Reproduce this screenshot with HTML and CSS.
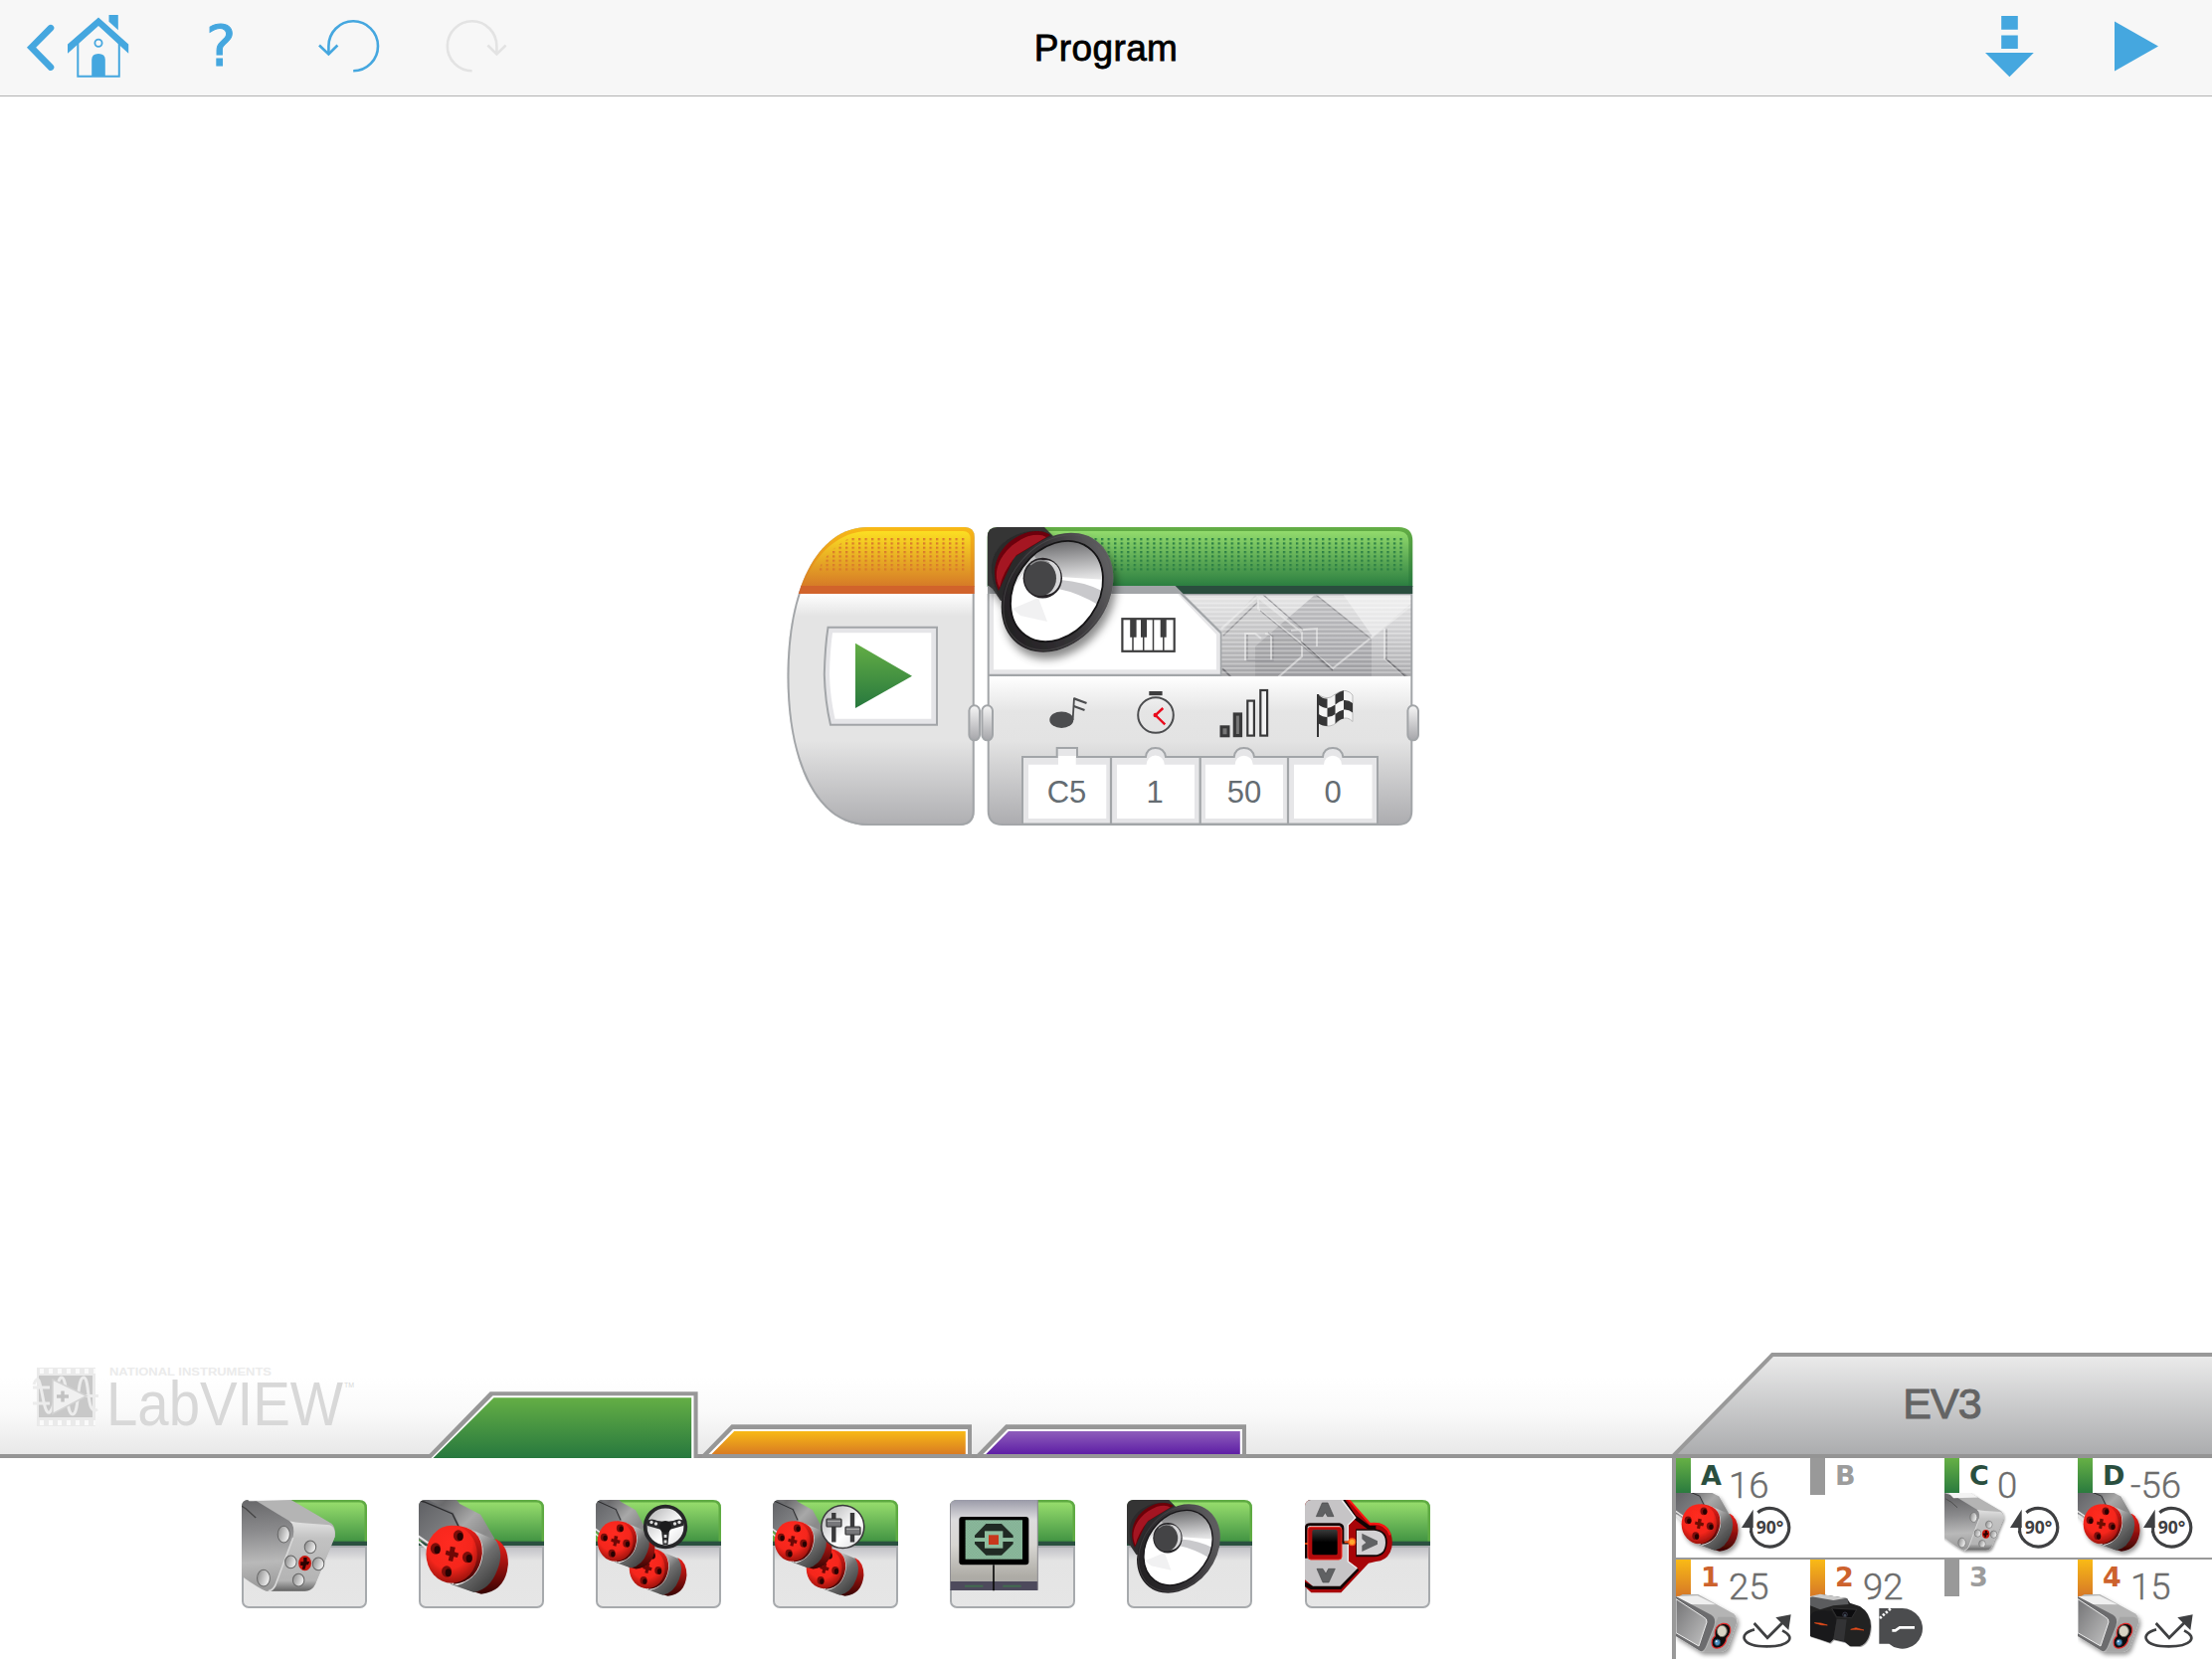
FILE: index.html
```html
<!DOCTYPE html>
<html lang="en">
<head>
<meta charset="utf-8">
<title>Program</title>
<link rel="stylesheet" href="styles.css">
</head>
<body>
<svg class="defs" width="0" height="0" aria-hidden="true">
  <defs>
    <linearGradient id="gBody" x1="0" y1="0" x2="0" y2="1"><stop offset="0" stop-color="#fff"/><stop offset=".1" stop-color="#e4e4e4"/><stop offset=".63" stop-color="#e4e4e4"/><stop offset="1" stop-color="#adadb0"/></linearGradient>
    <linearGradient id="gBody2" x1="0" y1="0" x2="0" y2="1"><stop offset="0" stop-color="#fff"/><stop offset=".24" stop-color="#e5e5e5"/><stop offset=".44" stop-color="#e3e3e3"/><stop offset="1" stop-color="#adadb0"/></linearGradient>
    <linearGradient id="gYel" x1="0" y1="0" x2="0" y2="1"><stop offset="0" stop-color="#fbdf22"/><stop offset="1" stop-color="#d67b27"/></linearGradient>
    <linearGradient id="gYelB" x1="0" y1="0" x2="0" y2="1"><stop offset="0" stop-color="#f8b916"/><stop offset="1" stop-color="#d97c22"/></linearGradient>
    <linearGradient id="gGrn" x1="0" y1="0" x2="0" y2="1"><stop offset="0" stop-color="#92db6c"/><stop offset="1" stop-color="#2a7d40"/></linearGradient>
    <linearGradient id="gGrnB" x1="0" y1="0" x2="0" y2="1"><stop offset="0" stop-color="#64ae45"/><stop offset="1" stop-color="#27783e"/></linearGradient>
    <linearGradient id="gGrnT" x1="0" y1="0" x2="0" y2="1"><stop offset="0" stop-color="#96dc6c"/><stop offset="1" stop-color="#429443"/></linearGradient>
    <linearGradient id="gPur" x1="0" y1="0" x2="0" y2="1"><stop offset="0" stop-color="#8e5dbb"/><stop offset="1" stop-color="#5e1fa5"/></linearGradient>
    <linearGradient id="gTile" x1="0" y1="0" x2="0" y2="1"><stop offset=".2" stop-color="#bcbcc2"/><stop offset=".4" stop-color="#e4e4e4"/><stop offset="1" stop-color="#e6e6e6"/></linearGradient>
    <linearGradient id="gPlug" x1="0" y1="0" x2="0" y2="1"><stop offset="0" stop-color="#f6f6f6"/><stop offset="1" stop-color="#a6a6aa"/></linearGradient>
    <linearGradient id="gTech" x1="0" y1="0" x2="0" y2="1"><stop offset="0" stop-color="#e6e6e6"/><stop offset=".5" stop-color="#cbcbcd"/><stop offset="1" stop-color="#a9a9ac"/></linearGradient>
    <linearGradient id="gSilver" x1="0" y1="0" x2=".75" y2="1"><stop offset="0" stop-color="#7d7d7d"/><stop offset=".3" stop-color="#c6c6c6"/><stop offset=".6" stop-color="#6f6f6f"/><stop offset="1" stop-color="#3a3a3a"/></linearGradient>
    <linearGradient id="gArm" x1="0" y1="0" x2="1" y2="1"><stop offset="0" stop-color="#55565a"/><stop offset="1" stop-color="#8f9092"/></linearGradient>
    <linearGradient id="gArm2" x1="0" y1="0" x2="1" y2=".6"><stop offset="0" stop-color="#9a9a9c"/><stop offset=".4" stop-color="#6a6a6c"/><stop offset=".75" stop-color="#a8a8a8"/><stop offset="1" stop-color="#8a8a8a"/></linearGradient>
    <radialGradient id="gRed" cx=".45" cy=".3" r=".75"><stop offset="0" stop-color="#ff2a20"/><stop offset=".6" stop-color="#f5261c"/><stop offset="1" stop-color="#8c0f0a"/></radialGradient>
    <linearGradient id="gRedS" x1="0" y1="0" x2="0" y2="1"><stop offset="0" stop-color="#f2211a"/><stop offset=".4" stop-color="#a81410"/><stop offset="1" stop-color="#350403"/></linearGradient>
    <linearGradient id="gMedSide" gradientUnits="userSpaceOnUse" x1="110" y1="60" x2="125" y2="320"><stop offset="0" stop-color="#6a6a6c"/><stop offset=".35" stop-color="#8c8c8e"/><stop offset=".7" stop-color="#b9b9b9"/><stop offset="1" stop-color="#9a9a9a"/></linearGradient>
    <linearGradient id="gMedFront" x1="0" y1="0" x2="0" y2="1"><stop offset="0" stop-color="#e2e2e2"/><stop offset=".25" stop-color="#c2c2c2"/><stop offset=".85" stop-color="#b4b4b4"/><stop offset="1" stop-color="#646464"/></linearGradient>
    <linearGradient id="gPanel" x1="0" y1="0" x2="1" y2="1"><stop offset="0" stop-color="#737375"/><stop offset="1" stop-color="#c2c2c2"/></linearGradient>
    <linearGradient id="gHole" x1="0" y1="0" x2="1" y2=".4"><stop offset="0" stop-color="#858585"/><stop offset="1" stop-color="#efefef"/></linearGradient>
    <linearGradient id="gCone" x1=".45" y1="0" x2=".6" y2="1"><stop offset="0" stop-color="#5c5c5e"/><stop offset=".3" stop-color="#8c8c8e"/><stop offset=".8" stop-color="#dcdcdd"/><stop offset="1" stop-color="#f4f4f4"/></linearGradient>
    <linearGradient id="gRim" x1=".8" y1="0" x2=".3" y2="1"><stop offset="0" stop-color="#68686a"/><stop offset=".5" stop-color="#353336"/><stop offset="1" stop-color="#211f21"/></linearGradient>
    <linearGradient id="gWheel" x1="0" y1="0" x2="1" y2="1"><stop offset="0" stop-color="#a9a9ab"/><stop offset=".6" stop-color="#fff"/><stop offset="1" stop-color="#d8d8da"/></linearGradient>
    <linearGradient id="gBrick" x1="0" y1="0" x2="0" y2="1"><stop offset="0" stop-color="#9a9aa8"/><stop offset=".22" stop-color="#dddcde"/><stop offset=".5" stop-color="#d8d6d2"/><stop offset=".85" stop-color="#aeaca6"/><stop offset="1" stop-color="#a9a8a6"/></linearGradient>
    <linearGradient id="gEv3" x1="0" y1="0" x2="0" y2="1"><stop offset="0" stop-color="#ebebeb"/><stop offset="1" stop-color="#aaabad"/></linearGradient>
    <linearGradient id="gBlk" x1="0" y1="0" x2="0" y2="1"><stop offset="0" stop-color="#3a3a3a"/><stop offset=".5" stop-color="#000"/></linearGradient>
    <pattern id="pYel" x="967" y="541" width="6.5" height="4.33" patternUnits="userSpaceOnUse"><rect width="2.3" height="2.2" fill="#d97a2a"/></pattern>
    <pattern id="pGrn" x="1407.4" y="541" width="6.53" height="4.33" patternUnits="userSpaceOnUse"><rect width="2.3" height="2.2" fill="#2c7f44"/></pattern>
    <pattern id="pLines" x="0" y="597" width="10" height="4.35" patternUnits="userSpaceOnUse"><rect width="10" height="1.5" fill="#fff" opacity=".38"/></pattern>
    <pattern id="pLcd" width="8" height="8" patternUnits="userSpaceOnUse"><path d="M0 0H4V4H8V8H4V4H0Z" fill="#6f9c84" opacity=".5"/></pattern>
    <filter id="shadow" x="-20%" y="-20%" width="150%" height="150%"><feDropShadow dx="3" dy="7" stdDeviation="4" flood-color="#000" flood-opacity=".45"/></filter>
    <filter id="shadowS" x="-20%" y="-20%" width="150%" height="150%"><feDropShadow dx="2" dy="3" stdDeviation="2" flood-color="#000" flood-opacity=".4"/></filter>
    <clipPath id="clipTile"><rect width="126" height="109" rx="6"/></clipPath>
    <clipPath id="clipPort"><rect y="35" width="135" height="66"/></clipPath>
    <clipPath id="clipSpk"><path d="M992.7 700V540Q992.7 530 1002.7 530H1140V700Z"/></clipPath>
    <clipPath id="clipCone"><ellipse cx="1062.5" cy="594.5" rx="42" ry="54.3" transform="rotate(35.4 1062.5 594.5)"/></clipPath>

    <g id="speaker">
      <path d="M992.7 530H1050L1062 542L1030 600L1006 604L998 592L992.7 588Z" fill="#343434"/>
      <path d="M1006 602C990 575 994 548 1026 536C1040 532 1052 533 1058 540L1030 560Z" fill="#2c2a2c"/>
      <path d="M1004 594C993 570 1006 543 1034 535Q1048 532 1056 538L1020 560Z" fill="#6c0008"/>
      <path d="M1005 591C995 572 1010 548 1034 539Q1046 536 1052 540L1022 558Q1008 575 1005 591Z" fill="#a51522"/>
      <ellipse cx="1063" cy="595.7" rx="50.2" ry="65.2" transform="rotate(37.8 1063 595.7)" fill="url(#gRim)"/>
      <ellipse cx="1063" cy="595.7" rx="48" ry="63" transform="rotate(37.8 1063 595.7)" fill="none" stroke="#5a585a" stroke-width="1" opacity=".5"/>
      <g clip-path="url(#clipCone)">
        <rect x="1000" y="530" width="130" height="130" fill="#fff"/>
        <path d="M1020 590L1030 575L1066 580L1112 583V540H1020Z" fill="url(#gCone)"/>
        <path d="M1010 610V560L1034 548L1044 566L1030 600Z" fill="#fff" opacity=".4"/>
        <path d="M1066 583Q1092 585 1112 596L1104 608Q1084 596 1064 592Z" fill="#c9c9cc"/>
        <path d="M1044 601L1018 612L1026 619L1053 625Z" fill="#f1f1f2"/>
      </g>
      <ellipse cx="1062.5" cy="594.5" rx="42" ry="54.3" transform="rotate(35.4 1062.5 594.5)" fill="none" stroke="#151316" stroke-width="1.8"/>
      <ellipse cx="1048.3" cy="581.2" rx="19.7" ry="20.4" fill="#252427"/>
      <ellipse cx="1051.5" cy="580.5" rx="15" ry="17.3" fill="#d6d6d8"/>
      <ellipse cx="1046" cy="581.3" rx="16" ry="17.8" fill="#444446"/>
      <path d="M1036 568Q1045 560 1055 566" stroke="#8a8a8c" stroke-width="1.4" fill="none"/>
    </g>

    <g id="motorArm" transform="scale(.33806 .33333) translate(-596 -54)">
      <path d="M560 30H690L718 66L780 98L822 172L760 190H640L560 160Z" fill="url(#gArm2)"/>
      <path d="M560 40L625 54L700 92L722 140L640 200L560 150Z" fill="url(#gArm)"/>
      <path d="M575 50L612 60L696 96L716 138" fill="none" stroke="#2c2c2e" stroke-width="4"/>
      <path d="M590 160L640 195M596 180L625 205" stroke="#e5e5e5" stroke-width="6"/>
    </g>
    <g id="motorHead" transform="scale(.33806 .33333) translate(-596 -54)">
      <path d="M825 172Q862 190 862 248Q855 330 782 338L740 325Z" fill="url(#gRedS)"/>
      <path d="M740 138L826 176Q850 215 830 265Q808 325 760 333L690 308Z" fill="url(#gSilver)"/>
      <path d="M737 137Q790 160 787 215Q780 290 710 312L690 306Z" fill="#eee"/>
      <path d="M701 131Q787 135 785 215Q775 300 700 308Z" fill="url(#gRedS)"/>
      <ellipse cx="694" cy="218" rx="76" ry="87" fill="url(#gRed)"/>
      <g fill="#7a0d09"><ellipse cx="714" cy="162" rx="15" ry="17"/><ellipse cx="646" cy="201" rx="15" ry="17"/><ellipse cx="741" cy="227" rx="15" ry="17"/><ellipse cx="679" cy="270" rx="15" ry="17"/></g>
      <g fill="#270202"><ellipse cx="719" cy="165" rx="9" ry="12"/><ellipse cx="651" cy="205" rx="9" ry="12"/><ellipse cx="746" cy="231" rx="9" ry="12"/><ellipse cx="684" cy="274" rx="9" ry="12"/></g>
      <path d="M690 194L705 197L702 211L715 215L711 228L700 226L697 240L684 237L687 223L675 219L678 206L688 209Z" fill="#6e0806"/>
    </g>
    <g id="medMotor" transform="scale(.33806 .33333) translate(-68 -54)">
      <path d="M10 -30L110 -10L215 54L335 125Q349 138 345 166L287 308Q278 328 256 329H140L10 240Z" fill="#b4b4b4"/>
      <path d="M10 10L110 56L210 118Q228 130 221 168L168 312Q158 330 142 329Q120 326 10 240Z" fill="url(#gMedSide)"/>
      <path d="M210 118Q226 122 250 124L330 130Q348 136 345 166L287 308Q278 328 256 329H148Q162 324 168 312L221 165Q228 130 210 118Z" fill="url(#gMedFront)"/>
      <path d="M221 168L168 312Q160 327 148 329" fill="none" stroke="#d8d8d8" stroke-width="5"/>
      <path d="M10 -30L105 -10L215 54H110L10 20Z" fill="#c9c9c9"/>
      <path d="M0 -40L120 -8L215 54L90 58Z" fill="#f3f3f3"/>
      <path d="M50 62L80 80L110 108" fill="none" stroke="#444" stroke-width="4"/>
      <g fill="url(#gHole)" stroke="#666" stroke-width="3"><ellipse cx="193" cy="158" rx="18" ry="25"/><ellipse cx="133" cy="290" rx="19" ry="25"/><ellipse cx="272" cy="196" rx="17" ry="19"/><ellipse cx="214" cy="241" rx="17" ry="19"/><ellipse cx="296" cy="247" rx="17" ry="19"/><ellipse cx="237" cy="296" rx="17" ry="19"/></g>
      <ellipse cx="256" cy="245" rx="19" ry="23" fill="#c8170f"/>
      <path d="M252 228H262V240H270L266 250H260L256 263H248L250 252H243V241H252Z" fill="#2a0302"/>
    </g>
    <!-- two motors, front one overlapping the rear one -->
    <g id="motorPair">
      <use href="#motorHead" transform="translate(28.5 30.6) scale(.7)"/>
      <use href="#motorArm" transform="translate(-3.5 -1) scale(.7 .76)"/>
      <use href="#motorHead" transform="translate(-3.5 3.3) scale(.7)"/>
    </g>
    <g id="tile">
      <rect x="1" y="30" width="124" height="78" rx="6" fill="url(#gTile)" stroke="#a7aaad" stroke-width="2"/>
      <path d="M0 42V8Q0 0 8 0H118Q126 0 126 8V42Z" fill="#5fab43"/>
      <path d="M2 42V8Q2 2.5 8 2.5H118Q123.5 2.5 123.5 8V42Z" fill="url(#gGrnT)"/>
      <rect y="41.7" width="126" height="4.3" fill="#2a5040"/>
      <path d="M2 47H124" stroke="#a7aaad" stroke-width="2"/>
    </g>
    <g id="rot90" transform="scale(.33333) translate(-45 -33)">
      <path d="M292 197A58 58 0 1 1 271 252" fill="none" stroke="#3f4042" stroke-width="9.5"/>
      <path d="M243 243L278 188V243Z" fill="#3f4042"/>
      <path d="M272 236V258" stroke="#3f4042" stroke-width="9"/>
      <text x="287" y="262" class="deg" textLength="83" lengthAdjust="spacingAndGlyphs">90°</text>
    </g>
    <g id="reflect" transform="scale(.33333) translate(-45 -339)">
      <path d="M366 553C410 575 385 601 320 601C240 601 232 562 282 550" fill="none" stroke="#3f4042" stroke-width="8"/>
      <path d="M281 531L321 575L372 524" fill="none" stroke="#3f4042" stroke-width="8.5"/>
      <path d="M392 505L346 514L385 552Z" fill="#3f4042"/>
    </g>
    <g id="colorSensor" transform="scale(.33333) translate(-45 -339)">
      <path d="M45 456L65 444H112L218 502Q231 512 228 530L202 602Q196 615 180 617H122L45 570Z" fill="#b4b4b4"/>
      <path d="M45 450L110 448L165 475L80 474Z" fill="#efefef"/>
      <path d="M45 450L152 506Q168 516 160 540L136 600Q130 616 120 616L45 570Z" fill="#6c6c6e"/>
      <path d="M45 458L128 512Q140 518 138 528L114 600L45 560Z" fill="url(#gPanel)" stroke="#ececec" stroke-width="3"/>
      <path d="M172 512H212Q230 514 227 532L202 602Q196 615 180 617H130L140 600L164 535Z" fill="#a5a5a5"/>
      <path d="M186 532C215 530 214 560 198 575C196 600 176 608 164 606C150 602 150 580 163 570C160 548 170 536 186 532Z" fill="#0a0a0a" stroke="#e22b2b" stroke-width="3.5"/>
      <ellipse cx="184" cy="555" rx="15" ry="17" fill="#d8d4c4" stroke="#6d6a60" stroke-width="3"/>
      <ellipse cx="170" cy="589" rx="9" ry="10" fill="#4d8fc0" stroke="#1d3c55" stroke-width="3"/><circle cx="167" cy="586" r="3" fill="#e8f4ff"/>
    </g>
  </defs>
</svg>

<div class="app">
  <header class="topbar">
    <div class="topbar-group">
      <svg class="ico-home" viewBox="26 12 106 68" width="106" height="68">
        <path d="M51 28.2L31.6 47.7L51 67.6" class="line" stroke-width="6.6" stroke-linecap="round" stroke-linejoin="miter"/>
        <path d="M99 17.6L129.2 44.6V53.8L99 26L68 53.8V44.6Z" class="solid"/>
        <path d="M109.5 15H118.8V30.3L109.5 21.7Z" class="solid"/>
        <path d="M78.3 43V76.8H119.8V43" class="line" stroke-width="2"/>
        <path d="M92.2 77V60Q92.2 54 99 54Q105.8 54 105.8 60V77Z" class="solid"/>
        <circle cx="99" cy="43.3" r="3.6" class="line" stroke-width="1.8"/>
      </svg>
      <span class="help">?</span>
      <svg class="ico-undo" viewBox="318 18 66 58" width="66" height="58"><path d="M355.2 71.3A24.8 25 0 1 0 330.4 46.5V55" class="line" stroke-width="2.6"/><path d="M321 45.5L330.4 54.5L339.4 45.5" class="line" stroke-width="2.6"/></svg>
      <svg class="ico-redo" viewBox="446 18 66 58" width="66" height="58"><g class="off"><path d="M474.6 71.3A24.8 25 0 1 1 499.4 46.5V55" class="line" stroke-width="2.6"/><path d="M490.4 45.5L499.4 54.5L508.6 45.5" class="line" stroke-width="2.6"/></g></svg>
    </div>
    <h1>Program</h1>
    <div class="topbar-group end">
      <svg viewBox="1994 14 53 66" width="53" height="66"><path d="M2012.2 16H2028.8V29.7H2012.2ZM2012.2 35.5H2028.8V49H2012.2ZM1996 53H2044.8L2020.4 77.2Z" class="solid"/></svg>
      <svg class="ico-play" viewBox="2124 20 48 54" width="48" height="54"><path d="M2126 21.6V71.6L2170 46.5Z" class="solid"/></svg>
    </div>
  </header>

  <main class="canvas">
    <svg class="program" viewBox="788 526 642 308" width="642" height="308">
      <!-- start block -->
      <clipPath id="cStart"><path id="startShape" d="M873 530H969.7Q979.7 530 979.7 540V815Q979.7 830 964.7 830H873C820 830 791.5 765 791.5 680C791.5 595 820 530 873 530Z"/></clipPath>
      <g clip-path="url(#cStart)">
        <rect x="788" y="596" width="194" height="236" fill="url(#gBody)"/>
        <use href="#startShape" fill="none" stroke="#a2a5a8" stroke-width="4"/>
        <rect x="788" y="530" width="194" height="60" fill="url(#gYelB)"/>
        <path d="M873 534H968Q975.7 534 975.7 542V589H807C820 555 845 534 873 534Z" fill="url(#gYel)"/>
        <path d="M856 540H970V574.5H822C828 560 840 548 856 540Z" fill="url(#pYel)"/>
        <rect x="788" y="589" width="194" height="8" fill="#d1632b"/>
      </g>
      <path d="M832.5 630.8H942V728.7H835Q829.5 705 828.8 678Q829.5 650 832.5 630.8Z" fill="#e5e5e8" stroke="#a2a5a8" stroke-width="2"/>
      <path d="M837 636.3H936.3V722.8H839.5Q834.5 700 834 678Q834.5 655 837 636.3Z" fill="#fff"/>
      <path d="M860 646.8V712L917 679.7Z" fill="url(#gGrnB)"/>
      <!-- sound block -->
      <path d="M992.7 597H1420.3V815Q1420.3 830 1405.3 830H1007.7Q992.7 830 992.7 815Z" fill="#a2a5a8"/>
      <path d="M994.7 680H1418.3V815Q1418.3 828.3 1405 828.3H1008Q994.7 828.3 994.7 815Z" fill="url(#gBody2)"/>
      <path d="M992.7 590V540Q992.7 530 1002.7 530H1406.3Q1420.3 530 1420.3 544V590Z" fill="url(#gGrnB)"/>
      <path d="M996.7 590V534H1405Q1416.3 534 1416.3 545V590Z" fill="url(#gGrn)"/>
      <rect x="1063" y="540.5" width="349" height="33.8" fill="url(#pGrn)"/>
      <rect x="1150" y="589" width="270.3" height="8" fill="#2a4e3e"/>
      <clipPath id="cTech"><rect x="1180" y="598.5" width="238.3" height="81.5"/></clipPath>
      <g clip-path="url(#cTech)">
        <rect x="1180" y="597" width="240" height="84" fill="url(#gTech)"/>
        <path d="M1350 597H1420V606L1380 640Z" fill="#f6f6f6" opacity=".55"/>
        <path d="M1262 680V650L1322 598L1379 642V680Z" fill="#88888c" opacity=".4"/>
        <path d="M1228 636L1262 598L1310 635L1308 660L1285 681H1228Z" fill="#8d8d90" opacity=".16"/>
        <g fill="none" stroke="#ececec" stroke-width="2" opacity=".6"><path d="M1228 632L1264 600L1309 636V660L1285 681M1265 602V612L1340 672L1420 608"/><path d="M1252 664V637H1262L1268 642M1278 664V638L1272 637M1298 634L1324 632V650M1392 632V662L1414 681"/></g>
        <g fill="none" stroke="#8b8b8e" stroke-width="1.3" opacity=".85"><path d="M1230 639L1264 606M1270 598L1310 633M1323 598L1378 642M1267 614L1338 673M1254 638V664H1280V640L1275 636M1394 632V663L1416 681M1229 672L1238 681"/></g>
        <path d="M1308 645L1340 674M1393 662L1414 681M1229 672L1238 681" stroke="#6e6e72" stroke-width="1.5"/>
        <rect x="1180" y="597" width="240" height="84" fill="url(#pLines)"/>
      </g>
      <path d="M993 589H1181.6L1228.4 635.5V680H993Z" fill="#a2a5a8"/>
      <path d="M994.7 597H1186.3L1226.8 637V677.8H994.7Z" fill="#e6e6e8"/>
      <path d="M999 597H1184L1223 638V673.2H999Z" fill="#fff"/>
      <g clip-path="url(#clipSpk)"><use href="#speaker" filter="url(#shadow)"/></g>
      <rect x="1128.4" y="622.2" width="52.3" height="32.6" fill="#fff" stroke="#3d3d3e" stroke-width="2.2"/>
      <path d="M1139 640V655M1149.7 640V655M1159.5 622V655M1169.8 640V655" stroke="#3d3d3e" stroke-width="1.5"/>
      <path d="M1136.2 622H1142.6V640.7H1136.2ZM1147 622H1153V640.7H1147ZM1166.7 622H1172.7V640.7H1166.7Z" fill="#3d3d3e"/>
      <!-- parameter icons -->
      <g fill="none" stroke="#4c4d4f">
        <ellipse cx="1067.3" cy="723.7" rx="12" ry="8.3" fill="#4c4d4f" stroke="none"/>
        <path d="M1078.6 724L1080 701.5" stroke-width="1.8"/><path d="M1080 702.4L1092.5 707M1079.6 710L1090.5 714" stroke-width="2.2"/>
        <circle cx="1162" cy="719" r="17.8" stroke-width="2"/><rect x="1155.3" y="695" width="13.3" height="4.2" fill="#3d3d3e" stroke="none"/>
        <path d="M1169.3 712L1161.7 719L1171.3 728.3" stroke="#ea0a1c" stroke-width="2.4"/><circle cx="1161.7" cy="719" r="2.2" fill="#ea0a1c" stroke="none"/>
      </g>
      <g fill="#777" stroke="#39393a" stroke-width="2.2"><rect x="1228" y="730.8" width="7" height="9" stroke-width="3"/><rect x="1241.3" y="718" width="6.2" height="21.6" stroke-width="3.2"/><rect x="1254.3" y="704.6" width="6.6" height="35" fill="#f2f2f2"/><rect x="1267.3" y="694" width="6.8" height="45.6" fill="#f2f2f2"/></g>
      <path d="M1326 698.5Q1332 703 1338 701Q1347 694 1353 694.5Q1358 695.5 1360 699V725.5Q1355 720 1348 723Q1340 731 1334 730Q1329 729 1326 727Z" fill="#f4f4f4" stroke="#bbb" stroke-width="1"/>
      <g fill="#353536"><rect x="1324" y="698" width="2" height="43"/><path d="M1325 698Q1330 703 1334.5 702.5V712Q1330 712 1325 708ZM1342.5 698.5Q1347 695 1351 694.3V704Q1346 705 1342.5 708.5ZM1334.5 712Q1339 711 1342.5 708.5V718Q1339 721 1334.5 721ZM1351 704Q1356 703.5 1360 707V716.5Q1356 713 1351 713.5ZM1325 717.5Q1330 721 1334.5 721V730Q1329 730 1325 727ZM1342.5 718Q1346 714.5 1351 713.5V722.5Q1347 723 1342.5 727.5Z"/></g>
      <!-- parameter values -->
      <path d="M1028 828.6V761H1062.7V752H1083V761H1152Q1153 752 1161.7 752Q1170.5 752 1172 761H1240.8Q1242 752 1250.7 752Q1259.5 752 1261 761H1330Q1331 752 1340 752Q1348.800 752 1350.3 761H1385V828.6Z" fill="#e6e6e8" stroke="#a2a5a8" stroke-width="2"/>
      <path d="M1117 760V828M1206.7 760V828M1295 760V828" stroke="#a2a5a8" stroke-width="2.2"/>
      <g fill="#fff"><path d="M1034 768.7H1064V760H1081.7V768.7H1112.3V823H1034Z"/><path d="M1123 768.7H1152.6A9 9 0 0 1 1170.8 768.7H1201V823H1123Z"/><path d="M1212 768.7H1241.7A9 9 0 0 1 1259.7 768.7H1290V823H1212Z"/><path d="M1301 768.7H1331A9 9 0 0 1 1349 768.7H1379.5V823H1301Z"/></g>
      <g class="value"><text x="1072.5" y="806.5">C5</text><text x="1161" y="806.5">1</text><text x="1251" y="806.5">50</text><text x="1340" y="806.5">0</text></g>
      <g fill="url(#gPlug)" stroke="#a2a5a8" stroke-width="2"><rect x="974.4" y="709.3" width="10.6" height="35" rx="5.3"/><rect x="987.4" y="709.3" width="10.6" height="35" rx="5.3"/><rect x="1415.4" y="709.3" width="10.6" height="35" rx="5.3"/></g>
    </svg>
  </main>

  <footer class="dock">
    <section class="palette">
      <div class="tabs">
        <svg class="logo" viewBox="30 1366 330 96" width="330" height="96">
          <path d="M37 1375H96V1434H37Z" fill="#eaeaea"/>
          <path d="M37 1378.5H96M37 1430.5H96" stroke="#fafafa" stroke-width="5" stroke-dasharray="4 5" stroke-dashoffset="-3"/>
          <rect x="39" y="1383" width="54" height="42" fill="#c8c8c8"/>
          <path d="M34 1392C42 1370 42 1425 50 1420C58 1412 56 1385 62 1385C68 1385 66 1422 73 1422C80 1422 77 1385 84 1385C91 1385 86 1425 98 1417M33 1395H50M33 1411H50M86 1403.5H99" fill="none" stroke="#ececec" stroke-width="3"/>
          <path d="M53 1387L87 1403.5L53 1421.5Z" fill="#f0f0f0" stroke="#d2d2d2" stroke-width="1.5"/>
          <path d="M57 1404H69M63 1398.5V1409.5" stroke="#c2c2c2" stroke-width="3.5"/>
          <text x="110" y="1382.7" class="ni" textLength="163" lengthAdjust="spacingAndGlyphs">NATIONAL INSTRUMENTS</text>
          <text x="107" y="1432.8" class="lv" textLength="238" lengthAdjust="spacingAndGlyphs">LabVIEW</text>
          <text x="346" y="1394.5" class="tm" textLength="10" lengthAdjust="spacingAndGlyphs">TM</text>
        </svg>
        <svg class="tab-green" viewBox="430 1398 273 68" width="273" height="68">
          <path d="M431.6 1462L492.7 1399.3H701.6V1466H434Z" fill="#979797"/><path d="M433.5 1466L495.5 1403.3H697.5V1466Z" fill="#fff"/><path d="M435.5 1466L496.5 1405.3H695.2V1466Z" fill="url(#gGrnB)"/>
        </svg>
        <svg viewBox="705 1432 274 34" width="274" height="34">
          <path d="M706.5 1462L735.5 1432.3H977V1466H706Z" fill="#979797"/><path d="M712.5 1462L737 1437H973V1462Z" fill="#fff"/><path d="M715.5 1462L738.2 1439H970.8V1462Z" fill="url(#gYelB)"/>
        </svg>
        <svg viewBox="981 1432 274 34" width="274" height="34">
          <path d="M982.3 1462L1011.3 1432.3H1253V1466H982Z" fill="#979797"/><path d="M988.5 1462L1013 1437H1249V1462Z" fill="#fff"/><path d="M991.3 1462L1014 1439H1246.8V1462Z" fill="url(#gPur)"/>
        </svg>
      </div>
      <div class="tiles">
        <svg viewBox="0 0 126 109"><use href="#tile"/><g clip-path="url(#clipTile)"><use href="#medMotor"/></g></svg>
        <svg viewBox="0 0 126 109"><use href="#tile"/><g clip-path="url(#clipTile)"><use href="#motorArm"/><use href="#motorHead"/></g></svg>
        <svg viewBox="0 0 126 109"><use href="#tile"/><g clip-path="url(#clipTile)"><use href="#motorPair"/></g>
          <circle cx="70" cy="27" r="20.3" fill="url(#gWheel)" stroke="#262628" stroke-width="3.8"/>
          <path d="M51 21Q56 18 62 21L70 22L78 21Q84 18 89 21L88 26L81 28L74 30L72.5 45H67.5L66 30L59 28L52 26Z" fill="#2a2a2c"/>
          <circle cx="70" cy="27" r="6" fill="#1b1b1d"/>
          <g fill="#ddd"><circle cx="56" cy="22.5" r="1.7"/><circle cx="60.5" cy="24" r="1.7"/><circle cx="84" cy="22.5" r="1.7"/><circle cx="79.5" cy="24" r="1.7"/><rect x="68.6" y="35" width="2.8" height="3"/><rect x="68.6" y="40.5" width="2.8" height="3"/></g>
        </svg>
        <svg viewBox="0 0 126 109"><use href="#tile"/><g clip-path="url(#clipTile)"><use href="#motorPair"/></g>
          <circle cx="70.3" cy="27" r="21.5" fill="url(#gWheel)" stroke="#38383a" stroke-width="1.6"/>
          <path d="M61.3 13V42.5M80 13V42.5" stroke="#39393b" stroke-width="4.4"/>
          <g fill="#77777a" stroke="#333" stroke-width="1.2"><rect x="54" y="19" width="15" height="8" rx="1"/><rect x="73" y="27" width="15" height="8" rx="1"/></g>
          <path d="M55 21.5H68M74 29.5H87" stroke="#aaa"/>
        </svg>
        <svg viewBox="0 0 126 109"><use href="#tile"/>
          <g clip-path="url(#clipTile)"><g transform="scale(.33333) translate(-615 -54)">
            <rect x="610" y="54" width="270" height="272" fill="url(#gBrick)"/><rect x="612" y="300" width="268" height="27" fill="#4d4a5c"/><path d="M660 314H715M775 314H830" stroke="#3f7a4c" stroke-width="6" opacity=".7"/>
            <path d="M616 54V326M880 54V326" stroke="#8b8a90" stroke-width="3"/>
            <rect x="643" y="105" width="210" height="145" rx="9" fill="#000"/><rect x="662" y="115" width="172" height="118" fill="#8fbd9f"/><rect x="662" y="115" width="172" height="118" fill="url(#pLcd)"/>
            <path d="M724 126H771L806 161V169H690V161ZM690 180H806V187L771 221H724L690 187Z" fill="#202a24"/>
            <rect x="720" y="148" width="55" height="52" fill="#8fbd9f"/><path d="M690 174H806" stroke="#8fbd9f" stroke-width="10"/><rect x="732" y="160" width="30" height="29" fill="#c8371c"/><path d="M747 250V328" stroke="#0a0a0a" stroke-width="5"/>
          </g></g>
        </svg>
        <svg viewBox="0 0 126 109"><use href="#tile"/><g clip-path="url(#clipTile)"><use href="#speaker" transform="translate(-740 -394.8) scale(.745)"/></g></svg>
        <svg viewBox="0 0 126 109"><use href="#tile"/>
          <g clip-path="url(#clipTile)"><g transform="scale(.33333) translate(-636 -54)">
            <path d="M630 50H765L832 124Q880 118 895 155Q905 185 893 212Q880 238 850 240L828 245L745 334H655L630 310Z" fill="#a80508"/>
            <path d="M765 50L832 126Q880 120 893 160" fill="none" stroke="#ff1712" stroke-width="6"/>
            <path d="M630 50H748L785 105L830 138H850M630 305L655 318H742L795 262" fill="none" stroke="#120404" stroke-width="12"/>
            <path d="M630 50H748L790 108L765 132V238L795 260L742 314H660L630 290Z" fill="#c6c4c6"/>
            <path d="M748 56L788 108L766 130V240L793 260" fill="none" stroke="#eee" stroke-width="4"/>
            <path d="M640 230V135Q642 128 652 128H740Q750 130 750 140V180" fill="none" stroke="#150505" stroke-width="8"/>
            <rect x="645" y="136" width="102" height="98" rx="9" fill="#b30b0c" stroke="#f02a20" stroke-width="3"/>
            <rect x="658" y="144" width="76" height="76" rx="5" fill="url(#gBlk)"/>
            <path d="M748 183H792" stroke="#1a0505" stroke-width="9"/><path d="M634 186H645M755 181H792" stroke="#ff5a18" stroke-width="5"/><circle cx="778" cy="181" r="10" fill="#ffa52e" stroke="#ff5a18" stroke-width="4"/>
            <path d="M790 142H845Q885 145 884 183Q882 225 845 226H790Z" fill="#160606"/>
            <path d="M792 146H845Q880 150 879 183Q878 220 845 220H792Z" fill="#d3d1d3"/>
            <path d="M808 155L855 178V188L808 210V192L820 183L808 172Z" fill="#606163"/>
            <path d="M688 63H705L723 104H704L697 92L690 104H670ZM672 262H690L699 277L707 262H727L708 303H690Z" fill="#606163" stroke="#4a4a4c" stroke-width="2"/>
          </g></g>
        </svg>
      </div>
    </section>

    <section class="brick">
      <div class="brick-title">
        <svg viewBox="1681 1360 543 106" width="543" height="106"><path d="M1682 1464L1782 1362H2230V1464Z" fill="url(#gEv3)" stroke="#999" stroke-width="4"/><path d="M1681 1464H2224" stroke="#949494" stroke-width="4"/></svg>
        <span>EV3</span>
      </div>
      <div class="ports">
        <div class="port out"><div class="port-head"><i></i><b>A</b><span>16</span></div>
          <svg viewBox="0 0 135 100"><g clip-path="url(#clipPort)"><g filter="url(#shadowS)"><use href="#motorArm" transform="translate(.5 28.5) scale(.69)"/><use href="#motorHead" transform="translate(.5 28.5) scale(.69)"/></g></g><use href="#rot90"/></svg></div>
        <div class="port none"><div class="port-head"><i></i><b>B</b></div></div>
        <div class="port out"><div class="port-head"><i></i><b>C</b><span>0</span></div>
          <svg viewBox="0 0 135 100"><g clip-path="url(#clipPort)"><use href="#medMotor" transform="translate(4.8 39.4) scale(.58)" filter="url(#shadowS)"/></g><use href="#rot90"/></svg></div>
        <div class="port out"><div class="port-head"><i></i><b>D</b><span>-56</span></div>
          <svg viewBox="0 0 135 100"><g clip-path="url(#clipPort)"><g filter="url(#shadowS)"><use href="#motorArm" transform="translate(.5 28.5) scale(.69)"/><use href="#motorHead" transform="translate(.5 28.5) scale(.69)"/></g></g><use href="#rot90"/></svg></div>
        <div class="port in"><div class="port-head"><i></i><b>1</b><span>25</span></div>
          <svg viewBox="0 0 135 100"><use href="#colorSensor" filter="url(#shadowS)"/><use href="#reflect"/></svg></div>
        <div class="port in"><div class="port-head"><i></i><b>2</b><span>92</span></div>
          <svg viewBox="0 0 135 100"><g transform="scale(.33333) translate(-450 -339)">
            <g filter="url(#shadowS)"><path d="M450 456L480 444L560 456L570 470L600 480Q632 500 633 540Q630 590 600 600H570L555 588L520 580L510 590L480 580L450 570Z" fill="#202022"/></g>
            <path d="M450 452L480 444L562 456L566 474L520 478L480 490L450 478Z" fill="#5b5c5e"/><path d="M450 450L480 443L560 455L520 462Z" fill="#c9c9c9"/>
            <path d="M456 500Q470 490 515 494L530 520L520 578L508 588L482 580L450 570V510Z" fill="#19191b"/><path d="M530 518L560 520L552 585L520 578Z" fill="#333335"/>
            <path d="M515 486L590 490L575 515L530 512Z" fill="#0c0c0e" stroke="#3c3c3e" stroke-width="2"/><circle cx="555" cy="505" r="7" fill="#15151c" stroke="#445" stroke-width="2"/><circle cx="555" cy="507" r="2" fill="#8ab"/>
            <path d="M463 530L482 531L502 537L484 536ZM572 550L588 545L612 552L590 550Z" fill="#f2501c" stroke="#e04a1a" stroke-width="2"/>
            <path d="M658 486H727A61 61 0 1 1 688 593H658Z" fill="#4b4c4e"/>
            <path d="M660 516L694 486" stroke="#fff" stroke-width="8" stroke-dasharray="7 5"/>
            <path d="M697 553H707L720 544H765" fill="none" stroke="#fff" stroke-width="8"/>
          </g></svg></div>
        <div class="port none"><div class="port-head"><i></i><b>3</b></div></div>
        <div class="port in"><div class="port-head"><i></i><b>4</b><span>15</span></div>
          <svg viewBox="0 0 135 100"><use href="#colorSensor" filter="url(#shadowS)"/><use href="#reflect"/></svg></div>
      </div>
    </section>
  </footer>
</div>
</body>
</html>
```
FILE: styles.css
```css
* { box-sizing: border-box; }
body { margin: 0; background: #fff; font-family: "Liberation Sans", Arial, sans-serif; }
svg { display: block; flex: none; }
.defs { position: absolute; }
.app { width: 2224px; height: 1668px; display: flex; flex-direction: column; overflow: hidden; }

/* top bar */
.topbar { height: 97px; flex: none; display: grid; grid-template-columns: 1fr auto 1fr; background: #f7f7f7; border-bottom: 1px solid #b2b2b2; }
.topbar-group { display: flex; align-items: flex-start; padding: 12px 0 0 26px; }
.topbar-group.end { justify-content: flex-end; padding: 14px 52px 0 0; }
.topbar h1 { margin: 0; font-size: 37px; font-weight: 400; line-height: 97px; color: #000; letter-spacing: .4px; -webkit-text-stroke: .8px #000; }
.solid { fill: #45a7df; }
.line { fill: none; stroke: #45a7df; }
.off .line { stroke: #e3e3e3; }
.help { width: 40px; margin-left: 75px; font: 57px/70px "DejaVu Sans", sans-serif; color: #45a7df; -webkit-text-stroke: 1px #45a7df; }
.ico-undo { margin: 6px 0 0 71px; }
.ico-redo { margin: 6px 0 0 62px; }
.ico-play { margin: 6px 0 0 77px; }

/* programming canvas */
.canvas { flex: 1; padding: 429px 0 0 788px; }
.value { font-size: 31px; fill: #646c72; text-anchor: middle; }

/* bottom dock */
.dock { height: 308px; flex: none; display: flex; background: linear-gradient(#fff 25px, #fafafa 60px, #e8e8e8 102px, #949494 102px, #949494 106px, #fff 106px); }
.palette { width: 1681px; }
.tabs { height: 106px; display: flex; align-items: flex-end; gap: 2px; padding-left: 30px; }
.logo { margin-bottom: 4px; }
.tab-green { margin-left: 68px; }
.ni { font-size: 10.5px; font-weight: 700; fill: #ebebeb; }
.lv { font-size: 63px; fill: #d8d8d8; }
.tm { font-size: 8px; fill: #d8d8d8; }
.tiles { display: flex; gap: 52.1px; padding: 42px 0 0 243px; }
.tiles svg { width: 126px; height: 109px; }

/* brick status */
.brick { width: 543px; }
.brick-title { display: grid; height: 106px; }
.brick-title > * { grid-area: 1 / 1; }
.brick-title span { justify-self: center; padding-top: 27px; font-size: 43px; line-height: 48px; letter-spacing: -1px; color: #646464; -webkit-text-stroke: 1px #646464; }
.ports { height: 202px; display: grid; grid-template-columns: 135px 135px 134px 135px; grid-template-rows: 102px 100px; border-left: 4px solid #999; background: #fff; }
.port { display: grid; }
.port:nth-child(-n+4) { border-bottom: 2px solid #999; }
.port > * { grid-area: 1 / 1; }
.port svg { width: 135px; height: 100px; overflow: hidden; }
.port-head { display: flex; align-items: flex-start; height: 44px; }
.port-head i { width: 15px; height: 37px; background: #999; }
.port-head b { width: 38px; padding-left: 10px; font: 700 27px/36px "DejaVu Sans", sans-serif; color: #9c9c9c; }
.port-head span { font: 300 36.5px/42px Roboto, sans-serif; padding-top: 7px; color: #6c6c6c; -webkit-text-stroke: .4px #6c6c6c; }
.out i { background: linear-gradient(#66b045, #27783e); }
.out b { color: #2a4f3f; }
.in i { background: linear-gradient(#f9ba16, #d67827); }
.in b { color: #cd622d; }
.deg { font: 700 52px "Open Sans", sans-serif; fill: #3f4042; }
```
